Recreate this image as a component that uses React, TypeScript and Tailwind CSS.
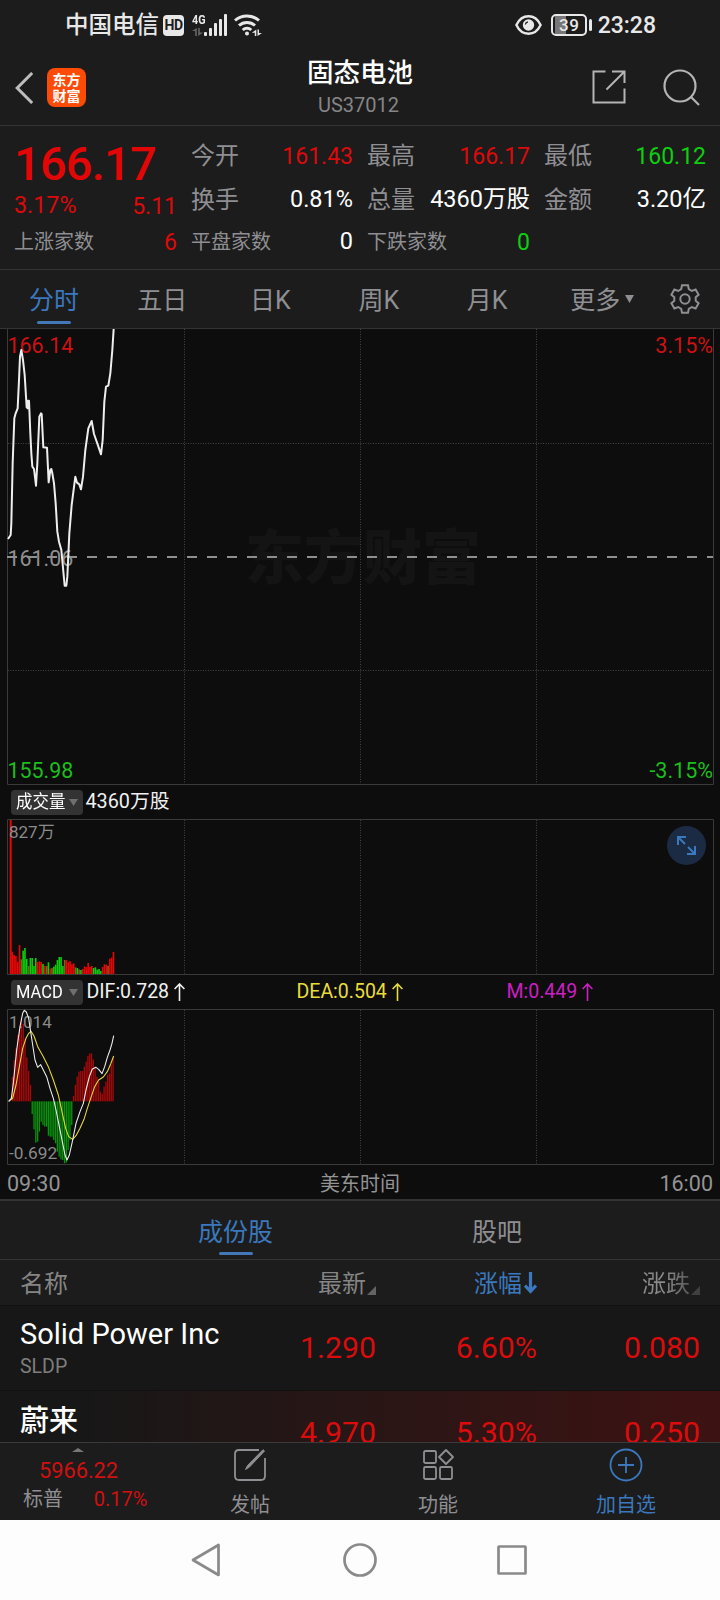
import React from "react";

type Tone = "red" | "green" | "white";

const toneClass: Record<Tone, string> = {
  red: "text-[23px] text-[#dc0a0a]",
  green: "text-[23px] text-[#0fce0f]",
  white: "text-[23.5px] text-white",
};

/* Chart series are plotted on a grid of three units per pixel. */
const priceLine =
  "24,657 32,645 34,610 38,430 43,295 47,280 53,265 57,180 60,110 64,90 69,120 74,165 80,262 83,265 84,242 87,242 91,340 94,400 97,440 102,447 108,497 112,430 118,290 123,280 125,282 130,382 141,383 146,487 151,450 154,447 157,460 162,490 167,550 172,635 177,665 184,690 194,797 199,797 202,770 208,640 215,555 226,470 231,488 238,493 243,508 249,470 256,390 265,325 275,303 282,342 297,385 303,403 308,360 313,245 318,200 325,197 331,160 337,90 341,27";

const difLine =
  "26,394 34,385 40,340 50,240 60,170 68,130 73,121 79,126 86,145 92,185 98,225 105,270 113,292 122,284 130,300 140,320 150,355 160,385 168,420 178,470 188,520 195,555 201,570 208,555 217,515 228,460 240,425 250,400 258,360 268,320 277,297 288,292 296,298 306,311 314,290 322,262 330,240 336,220 341,197";

const deaLine =
  "26,394 38,385 48,345 58,290 68,235 78,205 86,190 93,184 102,198 114,232 130,260 145,290 160,330 175,375 187,430 197,475 206,500 218,508 228,497 240,475 252,448 262,415 272,385 284,350 296,330 310,321 322,305 332,282 341,258";

const volume: [number, string][] = [
  [462, "r"], [67, "r"], [57, "r"], [54, "r"], [37, "r"], [87, "r"], [44, "m"], [70, "g"], [78, "g"], [45, "g"],
  [24, "m"], [48, "g"], [48, "g"], [24, "g"], [48, "g"], [36, "r"], [38, "r"], [36, "r"], [30, "g"], [24, "r"],
  [24, "m"], [35, "g"], [16, "r"], [18, "m"], [22, "g"], [28, "g"], [42, "g"], [51, "g"], [51, "g"], [24, "g"],
  [42, "m"], [42, "r"], [35, "r"], [39, "r"], [29, "r"], [32, "r"], [20, "m"], [18, "g"], [14, "m"], [12, "g"],
  [15, "r"], [23, "r"], [21, "r"], [33, "r"], [21, "r"], [24, "r"], [18, "g"], [20, "g"], [13, "g"], [15, "g"],
  [9, "g"], [21, "r"], [29, "r"], [28, "r"], [24, "m"], [46, "r"], [49, "r"], [66, "r"],
];

const macd: number[] = [
  0, 74, 124, 159, 199, 214, 250, 232, 189, 132, 91, 49, -38, -84, -124, -121, -91, -61, -71, -76, -76, -103, -106,
  -106, -116, -126, -151, -166, -174, -176, -186, -184, -146, -116, -71, 16, 49, 74, 89, 91, 91, 104, 119, 136, 144,
  144, 126, 104, 74, 59, 29, 22, 44, 59, 79, 84, 109, 132,
];

const barFill: Record<string, string> = { r: "#e80505", g: "#08cf08", m: "#84611a" };

function Stat({ label, value, tone, small }: { label: string; value: string; tone: Tone; small?: boolean }) {
  return (
    <div className="flex h-8 items-center justify-between">
      <span className={small ? "text-[20px] text-[#8f8f93]" : "text-[24px] text-[#8f8f93]"}>{label}</span>
      <span className={toneClass[tone]}>{value}</span>
    </div>
  );
}

function Frame({ height }: { height: number }) {
  return (
    <g fill="none" stroke="#3a3a3a">
      <path d={`M7.5 0.5H713.5V${height - 0.5}H7.5Z`} />
      <path d={`M184.5 1V${height}M360.5 1V${height}M536.5 1V${height}`} stroke="#444" strokeDasharray="1 1.5" />
    </g>
  );
}

function Picker({ text }: { text: string }) {
  return (
    <div className="ml-[10.5px] flex h-[25px] w-[72px] items-center rounded bg-[#333] pl-[5px]">
      <span className="w-[50px] origin-left scale-x-[0.89] whitespace-nowrap text-[18.5px] leading-[25px] text-white">
        {text}
      </span>
      <svg className="ml-[3px] h-[7px] w-[9px]" viewBox="0 0 9 7">
        <path d="M0 0H9L4.5 7Z" fill="#6f6f6f" />
      </svg>
    </div>
  );
}

function Indicator({ text }: { text: string }) {
  return (
    <span className="flex items-center gap-[5px] text-[19.5px]">
      {text}
      <svg className="h-[18px] w-[11px]" viewBox="0 0 11 18" fill="none" stroke="currentColor" strokeWidth="1.6">
        <path d="M5.500 18V1M.6 6L5.500 1L10.400 6" />
      </svg>
    </span>
  );
}

function StatusBar() {
  return (
    <div className="flex h-[50px] items-center pl-[65px] pr-[64px] text-[#e8e8e8]">
      <span className="mt-[2px] w-[95px] whitespace-nowrap text-[23.5px] font-medium">中国电信</span>
      <span className="ml-[3px] flex h-[21px] w-[21px] items-center justify-center rounded-[4px] bg-[#e8e8e8] text-[14px] font-bold tracking-[-0.5px] text-[#1c1c1c]">
        HD
      </span>
      <div className="ml-2 flex h-[22px] w-[36px] items-end">
        <div className="flex h-full w-[12px] flex-col justify-between">
          <span className="origin-left scale-x-[0.8] text-[13.5px] font-bold leading-[11px]">4G</span>
          <svg className="h-[8px] w-[11px]" viewBox="0 0 11 8" fill="#666">
            <path d="M4.8 0V8H3.2V3H0ZM6.2 0V8L11 4.5H7.8V0Z" />
          </svg>
        </div>
        <svg className="h-[22px] w-[24px]" viewBox="0 0 24 22" fill="currentColor">
          <rect x="0" y="18" width="3" height="4" rx="1" />
          <rect x="5" y="14" width="3" height="8" rx="1" />
          <rect x="10" y="9" width="3" height="13" rx="1" />
          <rect x="15" y="5" width="3" height="17" rx="1" />
          <rect x="20" y="0" width="3" height="22" rx="1" />
        </svg>
      </div>
      <svg className="ml-[6px] h-[22px] w-[28px]" viewBox="0 0 28 22" fill="none" stroke="currentColor" strokeWidth="3">
        <path d="M1 6.5A18 18 0 0 1 25 6.5M5 11.5A12 12 0 0 1 21 11.5M8.7 16A6.5 6.5 0 0 1 17.3 16" />
        <circle cx="13" cy="19.5" r="2" fill="currentColor" stroke="none" />
        <path d="M22.3 15.5V22H20.8V18.8H17.8ZM23.5 15.5V22L28 19H25V15.5Z" fill="currentColor" stroke="none" />
      </svg>
      <svg className="ml-auto h-[20px] w-[27px]" viewBox="0 0 27 20" fill="none" stroke="currentColor" strokeWidth="2.4">
        <path d="M1.4 10C4 4.5 8.5 1.3 13.5 1.3S23 4.5 25.6 10C23 15.5 18.5 18.7 13.5 18.7S4 15.5 1.4 10Z" />
        <circle cx="13.5" cy="10" r="5.7" fill="currentColor" stroke="none" />
        <path d="M10.3 9.5A3.2 3.2 0 0 1 13 6.8" stroke="#1c1c1c" strokeWidth="1.3" />
      </svg>
      <div className="ml-[9px] flex h-[22px] w-[36px] items-center justify-center rounded-[5px] border-2 border-current bg-[linear-gradient(90deg,#1c1c1c_2px,#777_2px,#777_13px,#1c1c1c_13px)] text-[17px] font-medium tracking-[0.5px]">
        39
      </div>
      <span className="ml-[2px] h-[12px] w-[2.5px] rounded-sm bg-current" />
      <span className="ml-[6px] text-[23px] font-medium">23:28</span>
    </div>
  );
}

function Header() {
  return (
    <header className="grid h-[76px] grid-cols-3 items-center border-b border-[#343434]">
      <div className="flex items-center">
        <svg className="ml-[15px] h-[32px] w-[18px]" viewBox="0 0 18 32" fill="none" stroke="#bdbdbd" strokeWidth="3">
          <path d="M17.2 1L2.2 16L17.2 31" />
        </svg>
        <div className="ml-[14px] flex h-[39px] w-[39px] flex-col items-center justify-center rounded-[8px] bg-[#fb4b06] text-[14px] font-bold leading-[16px] text-white">
          <span>东方</span>
          <span>财富</span>
        </div>
      </div>
      <div className="flex flex-col items-center">
        <h1 className="text-[26.5px] font-medium leading-[32px] text-white">固态电池</h1>
        <span className="mr-[3px] mt-[3px] text-[20px] leading-[26px] text-[#858587]">US37012</span>
      </div>
      <div className="flex items-center justify-end pr-[20px]">
        <svg className="mt-[-2px] h-[34px] w-[34px]" viewBox="0 0 34 34" fill="none" stroke="#b4b4b4" strokeWidth="2">
          <path d="M13.5 1.5H1.5V32.5H32.5V18.5M20 1.5H32.5V13M32 2L14.5 19.5" />
        </svg>
        <svg className="ml-[37px] h-[37px] w-[37px]" viewBox="0 0 37 37" fill="none" stroke="#b4b4b4" strokeWidth="2.2">
          <circle cx="17" cy="17" r="15.5" />
          <path d="M28 28L36 36" />
        </svg>
      </div>
    </header>
  );
}

function Quote() {
  return (
    <section className="flex h-[144px] gap-[14px] border-b border-[#343434] pl-[14px] pr-[14px] pt-[13px]">
      <div className="w-[163px]">
        <div className="flex h-[48px] items-center text-[47px] font-medium tracking-[-0.8px] text-[#e20606]">166.17</div>
        <div className="mt-[3px] flex h-[32px] items-center justify-between text-[23px] text-[#dc0a0a]">
          <span className="text-[23.3px]">3.17%</span>
          <span>5.11</span>
        </div>
        <div className="mt-[4px]">
          <Stat label="上涨家数" value="6" tone="red" small />
        </div>
      </div>
      <div className="w-[162px] pt-[1px]">
        <Stat label="今开" value="161.43" tone="red" />
        <div className="mt-[12px]">
          <Stat label="换手" value="0.81%" tone="white" />
        </div>
        <div className="mt-[10px]">
          <Stat label="平盘家数" value="0" tone="white" small />
        </div>
      </div>
      <div className="w-[163px] pt-[1px]">
        <Stat label="最高" value="166.17" tone="red" />
        <div className="mt-[12px]">
          <Stat label="总量" value="4360万股" tone="white" />
        </div>
        <div className="mt-[10px]">
          <Stat label="下跌家数" value="0" tone="green" small />
        </div>
      </div>
      <div className="flex-1 pt-[1px]">
        <Stat label="最低" value="160.12" tone="green" />
        <div className="mt-[12px]">
          <Stat label="金额" value="3.20亿" tone="white" />
        </div>
      </div>
    </section>
  );
}

function PeriodTabs() {
  return (
    <nav className="flex h-[59px] border-b border-[#343434] text-[25px] text-[#8f8f93]">
      <div className="flex w-[108px] flex-col items-center text-[#3b78bd]">
        <span className="mt-[15px] leading-[32px]">分时</span>
        <span className="mt-[4px] h-[3px] w-[34px] rounded-full bg-[#4277b8]" />
      </div>
      {["五日", "日K", "周K", "月K"].map((t) => (
        <div key={t} className="flex w-[108.3px] justify-center pt-[15px] leading-[32px]">
          {t}
        </div>
      ))}
      <div className="flex w-[122px] justify-center pt-[15px] leading-[32px]">
        更多
        <svg className="ml-[5px] mt-[10px] h-[8px] w-[9px]" viewBox="0 0 10 8" preserveAspectRatio="none">
          <path d="M0 0H10L5 8Z" fill="#8f8f93" />
        </svg>
      </div>
      <div className="pl-[7px] pt-[14px]">
        <svg className="h-[30px] w-[30px]" viewBox="0 0 30 30" fill="none" stroke="#8f8f93" strokeWidth="2">
          <path d="M12 1.2H18L18.8 5.2L21.8 7L25.6 5.6L28.6 10.8L25.7 13.3V16.7L28.6 19.2L25.6 24.4L21.8 23L18.8 24.8L18 28.8H12L11.2 24.8L8.2 23L4.4 24.4L1.4 19.2L4.3 16.7V13.3L1.4 10.8L4.4 5.6L8.2 7L11.2 5.2Z" />
          <circle cx="15" cy="15" r="4.7" />
        </svg>
      </div>
    </nav>
  );
}

function Charts() {
  return (
    <section className="h-[870px] bg-[#0d0d0d]">
      <div className="relative h-[456px]">
        <div className="absolute left-[245px] top-[194px] text-[59px] font-black leading-[72px] text-[#141414]">
          东方财富
        </div>
        <svg className="relative h-[456px] w-[720px]" viewBox="0 0 720 456">
          <path d="M7.5 0V455.5H713.5V0" fill="none" stroke="#3a3a3a" />
          <path
            d="M184.5 0V455M360.5 0V455M536.5 0V455M8 114.5H713M8 341.5H713"
            stroke="#444"
            strokeDasharray="1 1.5"
          />
          <path d="M7 228H713" stroke="#8f8f8f" strokeWidth="2" strokeDasharray="10 10" />
        </svg>
        <div className="absolute left-[7.5px] top-[3px] text-[21.4px] leading-[28px] text-[#cc1212]">166.14</div>
        <div className="absolute left-[7.5px] top-[216px] text-[21.4px] leading-[28px] text-[#8f8f8f]">161.06</div>
        <div className="absolute left-[7.5px] top-[428px] text-[21.4px] leading-[28px] text-[#1cbe1c]">155.98</div>
        <div className="absolute right-[7px] top-[3px] text-[21.5px] leading-[28px] text-[#cc1212]">3.15%</div>
        <div className="absolute right-[7px] top-[428px] text-[21.5px] leading-[28px] text-[#1cbe1c]">-3.15%</div>
        <svg className="absolute left-0 top-0 h-[456px] w-[720px]" viewBox="0 27 2160 1368">
          <polyline points={priceLine} fill="none" stroke="#eee" strokeWidth="6" strokeLinejoin="round" />
        </svg>
      </div>

      <div className="flex h-[34px] items-center gap-[3px]">
        <Picker text="成交量" />
        <span className="text-[19.8px] text-[#f0f0f0]">4360万股</span>
      </div>

      <div className="relative h-[156px]">
        <svg className="h-[156px] w-[720px]" viewBox="0 0 720 156">
          <Frame height={156} />
          <g transform="scale(0.33333)">
            {volume.map(([h, c], i) => (
              <rect key={i} x={29 + i * 5.42} y={465 - h} width={i ? 4.9 : 6} height={h} fill={barFill[c]} />
            ))}
          </g>
        </svg>
        <div className="absolute left-[9px] top-[1px] text-[17px] leading-[24px] text-[#8a8a8a]">827万</div>
        <div className="absolute right-[14px] top-[7px] flex h-[39px] w-[39px] items-center justify-center rounded-full bg-[#1a2b43]">
          <svg className="h-[19px] w-[19px]" viewBox="0 0 19 19" fill="none" stroke="#3b78bd" strokeWidth="2">
            <path d="M1 9V1H9M1.5 1.5L8 8M18 10V18H10M17.5 17.5L11 11" />
          </svg>
        </div>
      </div>

      <div className="flex h-[34px] items-center">
        <Picker text="MACD" />
        <div className="ml-[4px] w-[210px] text-[#f0f0f0]">
          <Indicator text="DIF:0.728" />
        </div>
        <div className="w-[210px] text-[#e8dc3a]">
          <Indicator text="DEA:0.504" />
        </div>
        <div className="text-[#cc1fc4]">
          <Indicator text="M:0.449" />
        </div>
      </div>

      <div className="relative h-[156px]">
        <svg className="absolute left-0 top-0 h-[156px] w-[720px]" viewBox="0 0 720 156">
          <Frame height={156} />
          <g transform="scale(0.33333)">
            {macd.map((v, i) => (
              <rect
                key={i}
                x={30 + i * 5.39}
                y={v > 0 ? 277 - v : 277}
                width="4"
                height={Math.abs(v)}
                fill={v > 0 ? "#a80808" : "#07930b"}
              />
            ))}
          </g>
        </svg>
        <div className="absolute left-[9px] top-[1px] text-[17px] leading-[24px] text-[#8a8a8a]">1.014</div>
        <div className="absolute left-[9px] top-[132px] text-[17.3px] leading-[24px] text-[#8a8a8a]">-0.692</div>
        <svg className="absolute left-0 top-0 h-[156px] w-[720px]" viewBox="0 117 2160 468">
          <polyline points={deaLine} fill="none" stroke="#e8d83a" strokeWidth="3.2" strokeLinejoin="round" />
          <polyline points={difLine} fill="none" stroke="#f0f0f0" strokeWidth="3.2" strokeLinejoin="round" />
        </svg>
      </div>

      <div className="grid h-[34px] grid-cols-3 items-center pl-[7px] pr-[7px] pt-[4px] text-[21.5px] text-[#949494]">
        <span>09:30</span>
        <span className="text-center text-[20px]">美东时间</span>
        <span className="text-right">16:00</span>
      </div>
    </section>
  );
}

function Corner() {
  return (
    <svg className="mb-[4px] ml-[1px] h-[9px] w-[9px] self-end" viewBox="0 0 9 9">
      <path d="M9 0V9H0Z" fill="#646464" />
    </svg>
  );
}

const cols = "grid grid-cols-[236px_140px_161px_163px]";

function Holdings() {
  return (
    <section className="h-[243px] overflow-hidden border-t-2 border-[#333]">
      <div className="flex h-[59px] border-b border-[#343434] pl-[105px] text-[25px] text-[#8f8f93]">
        <div className="flex w-[261px] flex-col items-center text-[#3b78bd]">
          <span className="mt-[16px] leading-[32px]">成份股</span>
          <span className="mt-[3px] h-[3px] w-[34px] rounded-full bg-[#4277b8]" />
        </div>
        <div className="flex w-[262px] justify-center pt-[16px] leading-[32px]">股吧</div>
      </div>
      <div className={`${cols} h-[45px] items-center pt-[2px] text-[24px] leading-[30px] text-[#858585]`}>
        <span className="pl-[20px]">名称</span>
        <span className="flex justify-end">
          最新
          <Corner />
        </span>
        <span className="flex items-center justify-end text-[#3b78bd]">
          涨幅
          <svg className="mb-[2px] ml-[2px] h-[22px] w-[13px]" viewBox="0 0 13 22" fill="none" stroke="currentColor" strokeWidth="3.2">
            <path d="M6.5 0V20M1 13.5L6.5 19.5L12 13.5" />
          </svg>
        </span>
        <span className="flex justify-end">
          <span className="bg-[linear-gradient(90deg,#8a8a8a_50%,#555)] bg-clip-text text-transparent">涨跌</span>
          <span className="flex opacity-50">
            <Corner />
          </span>
        </span>
      </div>
      <div className={`${cols} h-[86px] items-center border-b border-t border-[#111] bg-[#171717] pt-[1px] text-right text-[30.3px] text-[#d80c0c]`}>
        <div className="flex flex-col pl-[20px] text-left">
          <span className="whitespace-nowrap text-[29px] leading-[34px] text-white">Solid Power Inc</span>
          <span className="mt-[3px] text-[19.5px] leading-[26px] text-[#7e7e7e]">SLDP</span>
        </div>
        <span>1.290</span>
        <span>6.60%</span>
        <span>0.080</span>
      </div>
      <div className={`${cols} h-[84px] bg-[linear-gradient(90deg,#171717_10%,#271616_45%,#3e1212)] text-right text-[30.3px] leading-[84px] text-[#dc0c0c]`}>
        <span className="pl-[20px] pt-[13px] text-left text-[29px] font-medium leading-[34px] text-white">蔚来</span>
        <span>4.970</span>
        <span>5.30%</span>
        <span>0.250</span>
      </div>
    </section>
  );
}

function Action({ label, children }: { label: string; children: React.ReactNode }) {
  return (
    <div className="flex w-[188px] flex-col items-center pt-[4px]">
      <svg className="h-[36px] w-[36px]" viewBox="0 0 36 36" fill="none" stroke="currentColor" strokeWidth="1.8">
        {children}
      </svg>
      <span className="mt-[8px] text-[20px] leading-[28px]">{label}</span>
    </div>
  );
}

function BottomBar() {
  return (
    <footer className="flex h-[78px] border-t border-[#3a3a3a] text-[#8f8f93]">
      <div className="w-[156px]">
        <svg className="mx-auto mt-[5px] h-[4px] w-[12px]" viewBox="0 0 12 4">
          <path d="M0 4L6 0L12 4Z" fill="#777" />
        </svg>
        <div className="mt-[5px] pl-px text-center text-[21.8px] leading-[28px] text-[#d01010]">5966.22</div>
        <div className="flex justify-between pl-[23px] pr-[8.5px] text-[20px] leading-[29px]">
          <span>标普</span>
          <span className="text-[#d01010]">0.17%</span>
        </div>
      </div>
      <Action label="发帖">
        <path d="M27 3H7Q3 3 3 7V29Q3 33 7 33H29Q33 33 33 29V11" />
        <path d="M32.5 4L31 2.7L15.5 18.5L13.5 22.5L17.5 20Z" fill="currentColor" strokeWidth="1" />
      </Action>
      <Action label="功能">
        <rect x="4" y="4" width="12" height="12" rx="1.5" />
        <rect x="4" y="20" width="12" height="12" rx="1.5" />
        <rect x="20" y="20" width="12" height="12" rx="1.5" />
        <path d="M26 3L33 10L26 17L19 10Z" strokeLinejoin="round" />
      </Action>
      <div className="text-[#3b78bd]">
        <Action label="加自选">
          <circle cx="18" cy="18" r="15.5" />
          <path d="M18 10V26M10 18H26" />
        </Action>
      </div>
    </footer>
  );
}

export default function App() {
  return (
    <div className="flex h-[1600px] w-[720px] flex-col overflow-hidden bg-[#1c1c1c] font-[Roboto,'Noto_Sans_CJK_SC',sans-serif] leading-none">
      <StatusBar />
      <Header />
      <Quote />
      <PeriodTabs />
      <Charts />
      <Holdings />
      <BottomBar />
      <div className="flex h-[80px] justify-center bg-[#fdfdfd]">
        <svg className="h-[80px] w-[360px]" viewBox="180 0 360 80" fill="none" stroke="#8a8a8a" strokeWidth="2.7" strokeLinejoin="round">
          <path d="M218.5 25V55L193 40Z" />
          <circle cx="360" cy="40" r="15.5" />
          <rect x="498.5" y="26.5" width="27" height="27" rx="0.5" />
        </svg>
      </div>
    </div>
  );
}
